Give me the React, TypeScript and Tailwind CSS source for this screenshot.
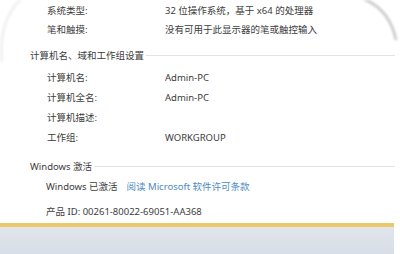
import React from "react";

type Row = { label: string; value?: React.ReactNode };

const FONT = '"Noto Sans", "Noto Sans CJK SC", sans-serif';

function InfoRow({ label, value, h = "h-[20px]" }: Row & { h?: string }) {
  return (
    <div className={`flex items-center pl-[47px] ${h}`}>
      <div className="w-[118px] shrink-0">{label}</div>
      <div>{value}</div>
    </div>
  );
}

function SectionHeader({ title }: { title: string }) {
  return (
    <div className="flex items-center h-[19px] pl-[30px] pr-[5px] gap-[2px]">
      <span className="shrink-0">{title}</span>
      <div className="flex-1 h-px bg-[#e3e3e3]" />
    </div>
  );
}

export default function App() {
  return (
    <div
      className="relative w-[400px] h-[254px] bg-white overflow-hidden flex flex-col text-[9.5px] text-[#3c3c3c] leading-none"
      style={{ fontFamily: FONT }}
    >
      {/* photo glare arcs */}
      <svg
        className="absolute inset-0 pointer-events-none blur-[1px]"
        width="400"
        height="254"
        viewBox="0 0 400 254"
      >
        <path d="M364 -1 Q390 10 396 40" fill="none" stroke="#cfcfcf" strokeWidth="3" />
        <path d="M2 62 Q-2 20 22 -2" fill="none" stroke="#f1f1f1" strokeWidth="3" />
      </svg>

      <div className="pt-[1px]">
        <InfoRow label="系统类型:" value="32 位操作系统，基于 x64 的处理器" h="h-[19px]" />
        <InfoRow label="笔和触摸:" value="没有可用于此显示器的笔或触控输入" h="h-[19px]" />
      </div>

      <div className="mt-[7px]">
        <SectionHeader title="计算机名、域和工作组设置" />
      </div>

      <div className="mt-[2.5px]">
        <InfoRow label="计算机名:" value="Admin-PC" />
        <InfoRow label="计算机全名:" value="Admin-PC" />
        <InfoRow label="计算机描述:" />
        <InfoRow label="工作组:" value="WORKGROUP" />
      </div>

      <div className="mt-[9.5px]">
        <SectionHeader title="Windows 激活" />
      </div>

      <div className="mt-[0.5px] flex items-center h-[19.5px] pl-[46px] gap-[9px]">
        <span>Windows 已激活</span>
        <span className="text-[#4d8bc4]">阅读 Microsoft 软件许可条款</span>
      </div>

      <div className="mt-[6px] flex items-center h-[19.5px] pl-[46px]">
        产品 ID: 00261-80022-69051-AA368
      </div>

      <div className="mt-auto w-[394px] flex flex-col">
        <div className="h-[4px] bg-[#ecc76c]" />
        <div className="h-[27px] bg-gradient-to-b from-[#e1e5ec] to-[#d8dee7]" />
      </div>
    </div>
  );
}
